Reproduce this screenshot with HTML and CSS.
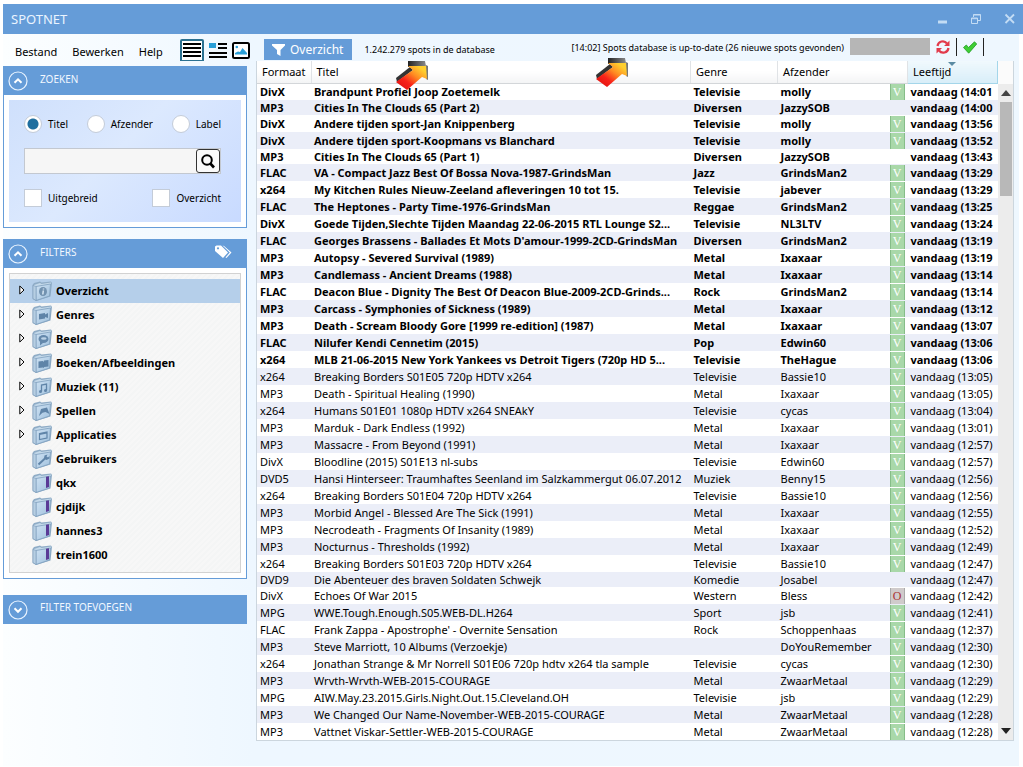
FILE: index.html
```
<!DOCTYPE html>
<html lang="nl">
<head>
<meta charset="utf-8">
<title>SPOTNET</title>
<link rel="stylesheet" href="styles.css">
</head>
<body>
<svg class="defs" aria-hidden="true">
  <defs>
    <linearGradient id="fg" x1="0" y1="0" x2="1" y2="1"><stop offset="0" stop-color="#cfe2f3"/><stop offset="1" stop-color="#9fc0dd"/></linearGradient>
    <linearGradient id="ag" x1="1" y1="0" x2="0" y2="1"><stop offset="0.15" stop-color="#ffcf2e"/><stop offset="0.4" stop-color="#ff8a22"/><stop offset="0.65" stop-color="#f8231a"/><stop offset="1" stop-color="#d80d0d"/></linearGradient>
    <linearGradient id="dg" x1="0" y1="0" x2="1" y2="0"><stop offset="0" stop-color="#222"/><stop offset="1" stop-color="#8a8a8a"/></linearGradient>
  </defs>
  <symbol id="folder" viewBox="0 0 20 20">
    <path d="M2 2 8 .5 9.500 1.500 19 .5 20 2 18.500 15.500 4 20 .5 18V4z" fill="#8facc6"/>
    <path d="M2 4 8 2 9.500 3 19 1.500 17.500 13 4 17z" fill="#c4d9ea"/>
    <path d="M4 5.500 18.500 3 17.500 15 4 19.500z" fill="url(#fg)" stroke="#7fa0be" stroke-width=".8"/>
    <path d="M1 4.500 4 5.500V19.500L1 17.500z" fill="#b6cee2" stroke="#7fa0be" stroke-width=".6"/>
  </symbol>
  <symbol id="arrow" viewBox="0 0 33 30">
    <path d="M12 0H29L30 5 12 6z" fill="url(#dg)"/>
    <path d="M30 4 32 5V19L30 18z" fill="#777"/>
    <path d="M0 17 14 6 17 9 1 21z" fill="#333"/>
    <path d="M12 5 30 5 31 18 26 16 11 29 0 21 17 9z" fill="url(#ag)"/>
  </symbol>
  <symbol id="up" viewBox="0 0 20 20"><circle cx="10" cy="10" r="9" fill="none" stroke="#e8f3ff" stroke-width="1.200"/><path d="M6.500 11.800 10 8.300 13.500 11.800" fill="none" stroke="#fff" stroke-width="2"/></symbol>
  <symbol id="down" viewBox="0 0 20 20"><circle cx="10" cy="10" r="9" fill="none" stroke="#e8f3ff" stroke-width="1.200"/><path d="M6.500 8.300 10 11.800 13.500 8.300" fill="none" stroke="#fff" stroke-width="2"/></symbol>
</svg>

<div class="window">
  <header class="titlebar">
    <h1>SPOTNET</h1>
    <div class="winbtns">
      <button aria-label="Minimaliseren"><svg width="12" height="12" viewBox="0 0 12 12"><path d="M2 9H11" stroke="#c3dcf4" stroke-width="3"/></svg></button>
      <button aria-label="Verkleinen"><svg width="12" height="12" viewBox="0 0 12 12"><path d="M3.500 4V1.500H10.500V7.500H8M3.500 2H10.500M1.500 5H7.500V10.500H1.500zM1.500 5.700H7.500" fill="none" stroke="#c3dcf4"/></svg></button>
      <button aria-label="Sluiten"><svg width="12" height="12" viewBox="0 0 12 12"><path d="M1.500 1.500 10 10M10 1.500 1.500 10" stroke="#c3dcf4" stroke-width="1.800"/></svg></button>
    </div>
  </header>

  <div class="body">
    <aside class="side">
      <nav class="menu">
        <button>Bestand</button><button>Bewerken</button><button>Help</button>
        <div class="views">
          <button class="view on" aria-label="Lijst"><svg width="20" height="19" viewBox="0 0 20 19"><path d="M1 3H19M1 7H19M1 11H19M1 15H19" stroke="#000" stroke-width="2"/></svg></button>
          <button class="view" aria-label="Details"><svg width="18" height="17" viewBox="0 0 18 17"><path d="M0 1h7v5H0z" fill="#2a9fd8"/><path d="M9 2H18M9 6H18M0 11H18M0 15H18" stroke="#000" stroke-width="2"/></svg></button>
          <button class="view" aria-label="Afbeeldingen"><svg width="18" height="17" viewBox="0 0 18 17"><rect x="1" y="1" width="16" height="15" rx="1.500" fill="#fff" stroke="#000" stroke-width="2"/><path d="M3 12.500V11l3-1.500 2 .5L10.500 6 15 11v1.500z" fill="#2a9fd8"/><circle cx="4.800" cy="5" r="1.300" fill="#2a9fd8"/></svg></button>
        </div>
      </nav>

      <section class="panel">
        <h2><button aria-label="Inklappen"><svg width="20" height="20"><use href="#up"/></svg></button>ZOEKEN</h2>
        <form class="search">
          <div class="row">
            <label><input type="radio" name="veld" checked>Titel</label>
            <label><input type="radio" name="veld">Afzender</label>
            <label><input type="radio" name="veld">Label</label>
          </div>
          <div class="box">
            <input type="text" aria-label="Zoekterm">
            <button type="button" aria-label="Zoek"><svg width="16" height="16" viewBox="0 0 16 16"><circle cx="7" cy="7" r="4.800" fill="none" stroke="#000" stroke-width="2"/><path d="M10.300 10.500 14 14.500" stroke="#000" stroke-width="2.600"/></svg></button>
          </div>
          <div class="row">
            <label><input type="checkbox">Uitgebreid</label>
            <label><input type="checkbox">Overzicht</label>
          </div>
        </form>
      </section>

      <section class="panel">
        <h2><button aria-label="Inklappen"><svg width="20" height="20"><use href="#up"/></svg></button>FILTERS
          <svg class="tags" width="17" height="14" viewBox="0 0 17 14"><path d="M0 1.500 1.500.500H6L13 7.500 8 13 0 6zM7.500.500 9 1l7.500 6.500-5 5.500-1-.6L14.800 7.600z" fill="#fff"/><circle cx="3" cy="3.300" r="1.100" fill="#659cd8"/></svg></h2>
        <ul class="tree">
          <li class="sel"><svg class="tw" viewBox="0 0 6 10"><path d="M.8 1 5 5 .8 9z"/></svg><svg class="fo" viewBox="0 0 20 20"><use href="#folder"/><ellipse cx="11" cy="10.500" rx="4" ry="4.500" fill="#7292b0"/><path d="M11.500 7.500v1M11.300 9.500 10.800 13.500" stroke="#d9e8f5" stroke-width="1.500"/></svg>Overzicht</li>
          <li><svg class="tw" viewBox="0 0 6 10"><path d="M.8 1 5 5 .8 9z"/></svg><svg class="fo" viewBox="0 0 20 20"><use href="#folder"/><path d="M7 9l6-1v1.500l3-1.500v5l-3-1v1.500l-6 1z" fill="#5f84a8"/></svg>Genres</li>
          <li><svg class="tw" viewBox="0 0 6 10"><path d="M.8 1 5 5 .8 9z"/></svg><svg class="fo" viewBox="0 0 20 20"><use href="#folder"/><ellipse cx="11.500" cy="10" rx="5" ry="4" fill="#6488ab"/><path d="M8 12.500v4l3.500-3z" fill="#6488ab"/><ellipse cx="11.800" cy="9.500" rx="2.800" ry="1.300" fill="#bcd3e7"/></svg>Beeld</li>
          <li><svg class="tw" viewBox="0 0 6 10"><path d="M.8 1 5 5 .8 9z"/></svg><svg class="fo" viewBox="0 0 20 20"><use href="#folder"/><path d="M6.500 8.500l4.300-.5.700 1 .6-1.500L16.500 7v6.500l-4.300.5-.7 1-.6-.5-4.400.5z" fill="#5f84a8"/></svg>Boeken/Afbeeldingen</li>
          <li><svg class="tw" viewBox="0 0 6 10"><path d="M.8 1 5 5 .8 9z"/></svg><svg class="fo" viewBox="0 0 20 20"><use href="#folder"/><path d="M9.500 14.500V8l5-1v6.500" fill="none" stroke="#5f84a8" stroke-width="1.300"/><circle cx="8.500" cy="14.500" r="1.500" fill="#5f84a8"/><circle cx="13.500" cy="13.500" r="1.500" fill="#5f84a8"/></svg>Muziek (11)</li>
          <li><svg class="tw" viewBox="0 0 6 10"><path d="M.8 1 5 5 .8 9z"/></svg><svg class="fo" viewBox="0 0 20 20"><use href="#folder"/><path d="M7 15 9 8l6-1.500L17.500 13l-4-2-3 .8z" fill="#5f84a8"/></svg>Spellen</li>
          <li><svg class="tw" viewBox="0 0 6 10"><path d="M.8 1 5 5 .8 9z"/></svg><svg class="fo" viewBox="0 0 20 20"><use href="#folder"/><path d="M7.500 8.500 15 7v6L7.500 14.500zM7.500 9.500 15 8" fill="none" stroke="#5f84a8" stroke-width="1.200"/></svg>Applicaties</li>
          <li><span class="tw"></span><svg class="fo" viewBox="0 0 20 20"><use href="#folder"/><path d="M6.500 15.500 13.500 9" stroke="#5f84a8" stroke-width="2"/><path d="M12 9.500l.5-3 3-1-1 2 1.500 1 1.500-1.500v2.500l-3 1.500z" fill="#5f84a8"/></svg>Gebruikers</li>
          <li><span class="tw"></span><svg class="fo" viewBox="0 0 20 20"><use href="#folder"/><path d="M14 3.800 17 3.200V14L14 15z" fill="#5a3a96"/></svg>qkx</li>
          <li><span class="tw"></span><svg class="fo" viewBox="0 0 20 20"><use href="#folder"/><path d="M14 3.800 17 3.200V14L14 15z" fill="#5a3a96"/></svg>cjdijk</li>
          <li><span class="tw"></span><svg class="fo" viewBox="0 0 20 20"><use href="#folder"/><path d="M14 3.800 17 3.200V14L14 15z" fill="#5a3a96"/></svg>hannes3</li>
          <li><span class="tw"></span><svg class="fo" viewBox="0 0 20 20"><use href="#folder"/><path d="M14 3.800 17 3.200V14L14 15z" fill="#5a3a96"/></svg>trein1600</li>
        </ul>
      </section>

      <section class="panel closed">
        <h2><button aria-label="Uitklappen"><svg width="20" height="20"><use href="#down"/></svg></button>FILTER TOEVOEGEN</h2>
      </section>
    </aside>

    <main class="main">
      <div class="toolbar">
        <button class="tab"><svg width="13" height="12" viewBox="0 0 13 12"><path d="M0 0H13V1.500L8.500 6V12L5 10V6L0 1.500z" fill="#fff"/></svg>Overzicht</button>
        <span class="count">1.242.279 spots in de database</span>
        <span class="status">[14:02] Spots database is up-to-date (26 nieuwe spots gevonden)</span>
        <span class="bar"></span>
        <button class="tool" aria-label="Vernieuwen"><svg width="14" height="14" viewBox="0 0 14 14"><path d="M1.500 6A5.300 5.300 0 0 1 11 3.500M12.500 8A5.300 5.300 0 0 1 3 10.500" fill="none" stroke="#e23a4b" stroke-width="2.200"/><path d="M13.500.500V6H8zM.500 13.500V8H6z" fill="#e23a4b"/></svg></button>
        <button class="tool" aria-label="Akkoord"><svg width="14" height="13" viewBox="0 0 14 13"><path d="M.5 6.500 3.300 4 5.500 6.500 11.500.8 13.700 3 5.700 12.200z" fill="#3fcf35" stroke="#1f9a22" stroke-width=".8"/></svg></button>
      </div>
      <svg class="mark one" width="33" height="30" aria-hidden="true"><use href="#arrow"/></svg>
      <svg class="mark two" width="33" height="30" aria-hidden="true"><use href="#arrow"/></svg>
      <div class="list">
        <table>
          <colgroup><col class="c1"><col><col class="c3"><col class="c4"><col class="c5"><col class="c6"></colgroup>
          <thead><tr><th>Formaat</th><th>Titel</th><th>Genre</th><th colspan="2">Afzender</th><th class="sorted">Leeftijd</th></tr></thead>
          <tbody class="new">
<tr><td>DivX<td>Brandpunt Profiel Joop Zoetemelk<td>Televisie<td>molly<td><b>V</b><td>vandaag (14:01</tr>
<tr class="low"><td>MP3<td>Cities In The Clouds 65 (Part 2)<td>Diversen<td>JazzySOB<td><td>vandaag (14:00</tr>
<tr><td>DivX<td>Andere tijden sport-Jan Knippenberg<td>Televisie<td>molly<td><b>V</b><td>vandaag (13:56</tr>
<tr><td>DivX<td>Andere tijden sport-Koopmans vs Blanchard<td>Televisie<td>molly<td><b>V</b><td>vandaag (13:52</tr>
<tr class="low"><td>MP3<td>Cities In The Clouds 65 (Part 1)<td>Diversen<td>JazzySOB<td><td>vandaag (13:43</tr>
<tr><td>FLAC<td>VA - Compact Jazz Best Of Bossa Nova-1987-GrindsMan<td>Jazz<td>GrindsMan2<td><b>V</b><td>vandaag (13:29</tr>
<tr><td>x264<td>My Kitchen Rules Nieuw-Zeeland afleveringen 10 tot 15.<td>Televisie<td>jabever<td><b>V</b><td>vandaag (13:29</tr>
<tr><td>FLAC<td>The Heptones - Party Time-1976-GrindsMan<td>Reggae<td>GrindsMan2<td><b>V</b><td>vandaag (13:25</tr>
<tr><td>DivX<td>Goede Tijden,Slechte Tijden Maandag 22-06-2015 RTL Lounge S2...<td>Televisie<td>NL3LTV<td><b>V</b><td>vandaag (13:24</tr>
<tr><td>FLAC<td>Georges Brassens - Ballades Et Mots D'amour-1999-2CD-GrindsMan<td>Diversen<td>GrindsMan2<td><b>V</b><td>vandaag (13:19</tr>
<tr><td>MP3<td>Autopsy - Severed Survival (1989)<td>Metal<td>Ixaxaar<td><b>V</b><td>vandaag (13:19</tr>
<tr><td>MP3<td>Candlemass - Ancient Dreams (1988)<td>Metal<td>Ixaxaar<td><b>V</b><td>vandaag (13:14</tr>
<tr><td>FLAC<td>Deacon Blue - Dignity The Best Of Deacon Blue-2009-2CD-Grinds...<td>Rock<td>GrindsMan2<td><b>V</b><td>vandaag (13:14</tr>
<tr><td>MP3<td>Carcass - Symphonies of Sickness (1989)<td>Metal<td>Ixaxaar<td><b>V</b><td>vandaag (13:12</tr>
<tr><td>MP3<td>Death - Scream Bloody Gore [1999 re-edition] (1987)<td>Metal<td>Ixaxaar<td><b>V</b><td>vandaag (13:07</tr>
<tr><td>FLAC<td>Nilufer Kendi Cennetim (2015)<td>Pop<td>Edwin60<td><b>V</b><td>vandaag (13:06</tr>
<tr><td>x264<td>MLB 21-06-2015 New York Yankees vs Detroit Tigers (720p HD 5...<td>Televisie<td>TheHague<td><b>V</b><td>vandaag (13:06</tr>
          </tbody>
          <tbody class="seen">
<tr><td>x264<td>Breaking Borders S01E05 720p HDTV x264<td>Televisie<td>Bassie10<td><b>V</b><td>vandaag (13:05)</tr>
<tr><td>MP3<td>Death - Spiritual Healing (1990)<td>Metal<td>Ixaxaar<td><b>V</b><td>vandaag (13:05)</tr>
<tr><td>x264<td>Humans S01E01 1080p HDTV x264 SNEAkY<td>Televisie<td>cycas<td><b>V</b><td>vandaag (13:04)</tr>
<tr><td>MP3<td>Marduk - Dark Endless (1992)<td>Metal<td>Ixaxaar<td><b>V</b><td>vandaag (13:01)</tr>
<tr><td>MP3<td>Massacre - From Beyond (1991)<td>Metal<td>Ixaxaar<td><b>V</b><td>vandaag (12:57)</tr>
<tr><td>DivX<td>Bloodline (2015) S01E13 nl-subs<td>Televisie<td>Edwin60<td><b>V</b><td>vandaag (12:57)</tr>
<tr><td>DVD5<td>Hansi Hinterseer: Traumhaftes Seenland im Salzkammergut 06.07.2012<td>Muziek<td>Benny15<td><b>V</b><td>vandaag (12:56)</tr>
<tr><td>x264<td>Breaking Borders S01E04 720p HDTV x264<td>Televisie<td>Bassie10<td><b>V</b><td>vandaag (12:56)</tr>
<tr><td>MP3<td>Morbid Angel - Blessed Are The Sick (1991)<td>Metal<td>Ixaxaar<td><b>V</b><td>vandaag (12:55)</tr>
<tr><td>MP3<td>Necrodeath - Fragments Of Insanity (1989)<td>Metal<td>Ixaxaar<td><b>V</b><td>vandaag (12:52)</tr>
<tr><td>MP3<td>Nocturnus - Thresholds (1992)<td>Metal<td>Ixaxaar<td><b>V</b><td>vandaag (12:49)</tr>
<tr><td>x264<td>Breaking Borders S01E03 720p HDTV x264<td>Televisie<td>Bassie10<td><b>V</b><td>vandaag (12:47)</tr>
<tr class="low"><td>DVD9<td>Die Abenteuer des braven Soldaten Schwejk<td>Komedie<td>Josabel<td><td>vandaag (12:47)</tr>
<tr><td>DivX<td>Echoes Of War 2015<td>Western<td>Bless<td><b class="o">O</b><td>vandaag (12:42)</tr>
<tr><td>MPG<td>WWE.Tough.Enough.S05.WEB-DL.H264<td>Sport<td>jsb<td><b>V</b><td>vandaag (12:41)</tr>
<tr><td>FLAC<td>Frank Zappa - Apostrophe' - Overnite Sensation<td>Rock<td>Schoppenhaas<td><b>V</b><td>vandaag (12:37)</tr>
<tr><td>MP3<td>Steve Marriott, 10 Albums (Verzoekje)<td><td>DoYouRemember<td><b>V</b><td>vandaag (12:30)</tr>
<tr><td>x264<td>Jonathan Strange &amp; Mr Norrell S01E06 720p hdtv x264 tla sample<td>Televisie<td>cycas<td><b>V</b><td>vandaag (12:30)</tr>
<tr><td>MP3<td>Wrvth-Wrvth-WEB-2015-COURAGE<td>Metal<td>ZwaarMetaal<td><b>V</b><td>vandaag (12:29)</tr>
<tr><td>MPG<td>AIW.May.23.2015.Girls.Night.Out.15.Cleveland.OH<td>Televisie<td>jsb<td><b>V</b><td>vandaag (12:29)</tr>
<tr><td>MP3<td>We Changed Our Name-November-WEB-2015-COURAGE<td>Metal<td>ZwaarMetaal<td><b>V</b><td>vandaag (12:28)</tr>
<tr><td>MP3<td>Vattnet Viskar-Settler-WEB-2015-COURAGE<td>Metal<td>ZwaarMetaal<td><b>V</b><td>vandaag (12:28)</tr>
          </tbody>
        </table>
        <div class="scroll">
          <svg width="10" height="6" viewBox="0 0 10 6"><path d="M0 6 5 0 10 6z" fill="#444"/></svg>
          <div class="thumb"></div>
          <svg class="dn" width="10" height="6" viewBox="0 0 10 6"><path d="M0 0H10L5 6z" fill="#222"/></svg>
        </div>
      </div>
    </main>
  </div>
</div>
</body>
</html>
```
FILE: styles.css
```
* { box-sizing: border-box; }
body { margin: 0; background: #fff; color: #000; font: 11px/16px "Noto Sans", sans-serif; }
button { border: 0; padding: 0; margin: 0; background: none; font: inherit; color: inherit; display: flex; align-items: center; }
svg { display: block; flex: none; }
.defs { position: absolute; width: 0; height: 0; }

.window { padding: 4px 0 0 3px; }
.titlebar { height: 30px; background: #659cd8; display: flex; align-items: center; justify-content: space-between; padding: 0 7px 0 8px; }
.titlebar h1 { margin: 0; font-size: 13px; line-height: 20px; font-weight: 400; color: #eaf4ff; }
.winbtns { display: flex; gap: 22px; }

.body { display: grid; grid-template-columns: 244px minmax(0, 1fr); gap: 9px; padding: 0 5px 25px 0; margin-right: 4px; background: linear-gradient(90deg, #fcfeff 0, #eef7ff 250px, #eef7fe 100%); }

.menu { display: flex; align-items: center; height: 32px; padding-left: 12px; }
.menu > button { margin-right: 15px; height: 32px; padding-top: 4px; }
.views { display: flex; align-items: center; gap: 5px; margin-left: auto; margin-right: -3px; }
.view.on { border: 2px solid #2b7191; border-bottom-width: 1px; border-radius: 2px 2px 0 0; height: 22px; width: 24px; justify-content: center; background: #fff; }

.panel { border: 1px solid #659cd8; background: #fff; padding-bottom: 5px; margin-bottom: 11px; }
.panel h2 { margin: 0 0 5px; height: 28px; background: #659cd8; color: #f2f8ff; font-size: 10px; line-height: 14px; font-weight: 400; display: flex; align-items: center; gap: 12px; padding: 0 14px 5px 4px; }
.panel h2 button { padding-top: 5px; }
.tags { margin-left: auto; }
.closed { margin: 16px 0 0; padding: 0; }
.closed h2 { margin: 0; height: 27px; }

.search { margin: 0 5px; padding: 15px 20px 15px 15px; background: linear-gradient(135deg, #cfe0fc, #dce9fe 45%, #c8daff); display: grid; gap: 15px; font-size: 10px; line-height: 14px; }
.row { display: flex; justify-content: space-between; }
.row label { display: flex; align-items: center; gap: 6px; }
.row input { appearance: none; margin: 0; width: 18px; height: 18px; background: #fff; border: 1px solid #c4ccd8; }
.row input[type=radio] { border-radius: 50%; }
.row input[type=radio]:checked { background: radial-gradient(circle, #1f6f9f 5px, #fff 6px); }
.box { display: flex; border: 1px solid #c3c8d0; background: #f6f6f6; height: 26px; }
.box input { flex: 1; min-width: 0; border: 0; padding: 0 4px; background: transparent; font: inherit; }
.box button { width: 24px; height: 24px; justify-content: center; border: 1px solid #333; border-radius: 3px; background: #fafafa; }

.tree { list-style: none; margin: 0 5px; padding: 5px 0; border: 1px solid #d2d2d2; background: repeating-linear-gradient(135deg, #f7f7f7 0 2px, #f4f5f5 2px 4px); font-weight: 700; }
.tree li { display: flex; align-items: center; height: 24px; padding-left: 9px; }
.tree .sel { background: #b5cfea; }
.tw { width: 6px; height: 10px; margin: 0 7px 3px 0; fill: #fff; stroke: #000; flex: none; }
.fo { width: 20px; height: 20px; margin-right: 4px; }

.main { position: relative; }
.toolbar { display: flex; align-items: flex-start; height: 27px; padding: 4px 30px 0 8px; }
.tab { height: 21px; margin-top: 1px; padding: 0 9px 0 8px; gap: 5px; background: #659cd8; color: #fff; font-size: 12px; }
.count, .status { font-size: 9px; line-height: 14px; white-space: nowrap; }
.count { margin: 5px 0 0 12px; }
.status { margin: 3px 0 0 auto; }
.bar { width: 80px; height: 17px; margin-left: 6px; background: #b6b6b6; }
.tool { height: 18px; padding: 0 6px; border-right: 1px solid #222; }
.mark { position: absolute; z-index: 2; }
.one { left: 140px; top: 27px; }
.two { left: 340px; top: 24px; }

.list { display: flex; border: 1px solid #ccd6de; border-top: 0; background: #fff; }
table { flex: 1; width: 0; table-layout: fixed; border-collapse: collapse; }
.c1 { width: 54px; } .c3 { width: 87px; } .c4 { width: 110px; } .c5 { width: 20px; } .c6 { width: 90px; }
th { height: 22px; padding: 0 0 0 5px; text-align: left; font-weight: 400; background: linear-gradient(#fff 45%, #f3f4f5); border-bottom: 1px solid #d3d6d9; border-right: 1px solid #e0e3e6; }
.sorted { background: linear-gradient(#f0f9fd, #d8eef8); border: 1px solid #a4d6ea; border-top: 0; position: relative; }
.sorted::before { content: ""; position: absolute; left: 40px; top: 1px; border: 4px solid transparent; border-top-color: #5b8ba3; border-bottom: 0; }
td { height: 17px; padding: 0 0 0 3px; line-height: 15px; white-space: nowrap; overflow: hidden; }
.low td { height: 15px; }
.new { font-weight: 700; }
tbody.new tr:nth-child(even), tbody.seen tr:nth-child(odd) { background: #ebeef8; }
td:nth-child(5) { padding: 0 0 0 2px; }
td b { display: block; width: 15px; height: 16px; background: #a9d8a9; border-left: 1px solid #86bd88; border-right: 1px solid #86bd88; color: #fff; font: 12px/16px "Liberation Serif", serif; text-align: center; }
td .o { background: #d0cbcb; border-color: #aaa; color: #a33; }
.scroll { width: 15px; background: #ececec; border-top: 23px solid #fbfbfb; display: flex; flex-direction: column; align-items: center; padding: 6px 0; }
.thumb { width: 12px; height: 94px; margin-top: 6px; background: #b8b8b8; }
.dn { margin-top: auto; }
```
